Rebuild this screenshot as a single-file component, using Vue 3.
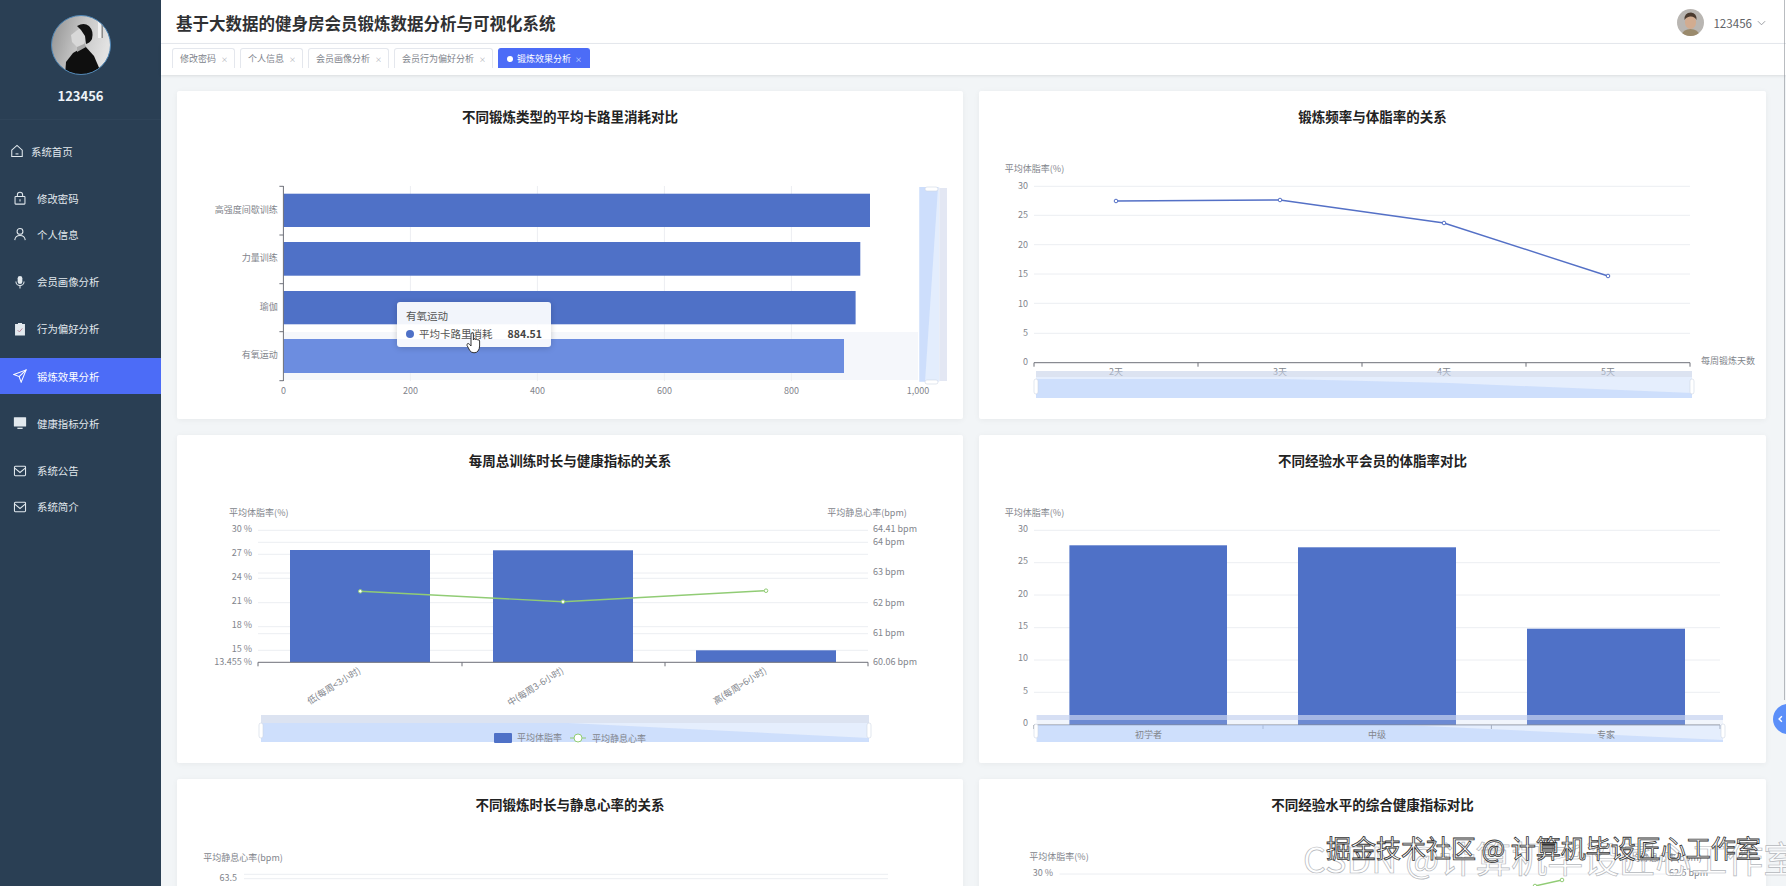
<template>
  <div class="page">
    <aside class="sidebar">
      <div class="profile">
        <svg class="profile-pic" viewBox="0 0 60 60">
          <defs>
            <clipPath id="pc"><circle cx="30" cy="30" r="29.5" /></clipPath>
            <linearGradient id="wall" x1="0" y1="0" x2="1" y2="0.3">
              <stop offset="0" stop-color="#8e8e8e" />
              <stop offset="0.55" stop-color="#c6c6c6" />
              <stop offset="1" stop-color="#e2e2e2" />
            </linearGradient>
          </defs>
          <g clip-path="url(#pc)">
            <rect width="60" height="60" fill="url(#wall)" />
            <rect x="47" y="5" width="3.5" height="18" fill="#f1f1f1" />
            <rect x="50.5" y="5" width="1.5" height="18" fill="#8d8d8d" />
            <path d="M14 61 L15 47 L22 38 L34 31 L43 41 L49 55 L51 61 Z" fill="#0f0f0f" />
            <path d="M26 30 L33 27 L35 32 L26 37 Z" fill="#a9a9a9" />
            <path d="M20 20 L29 13 L35 22 L33 29 L26 32 L21 27 Z" fill="#d8d8d8" />
            <path d="M26 11 Q33 7 38 11 Q43 16 41 24 Q39 28 35 29 L34 21 L30 15 Z" fill="#121212" />
          </g>
          <circle cx="30" cy="30" r="29.5" fill="none" stroke="#4f86b5" />
        </svg>
        <div class="profile-name">123456</div>
      </div>
      <nav class="menu">
        <div
          v-for="item in menu"
          :key="item.label"
          class="menu-item"
          :class="{ active: item.active, home: item.home, spaced: item.spaced }"
        >
          <svg class="menu-icon" viewBox="0 0 24 24" v-html="item.icon"></svg>
          <span>{{ item.label }}</span>
        </div>
      </nav>
    </aside>

    <div class="content">
      <header class="topbar">
        <h1 class="app-title">基于大数据的健身房会员锻炼数据分析与可视化系统</h1>
        <div class="user">
          <svg class="user-pic" viewBox="0 0 27 27">
            <defs>
              <clipPath id="uc"><circle cx="13.5" cy="13.5" r="13.5" /></clipPath>
            </defs>
            <g clip-path="url(#uc)">
              <rect width="27" height="27" fill="#b9b6b2" />
              <path d="M4 27 Q6 20 13.5 20 Q21 20 23 27 Z" fill="#9a8a6c" />
              <ellipse cx="13.5" cy="13" rx="5.6" ry="7" fill="#d2ac90" />
              <path d="M7.5 11 Q7 3.5 14 3.5 Q20 4 19.5 11 Q17.5 7 13 7.5 Q9 8 7.5 11 Z" fill="#4a3a2e" />
            </g>
          </svg>
          <span class="user-name">123456</span>
          <svg class="chevron" viewBox="0 0 10 6"><path d="M1 1 L5 5 L9 1" fill="none" stroke="#909399" /></svg>
        </div>
      </header>

      <div class="tabs">
        <div v-for="tab in tabs" :key="tab.label" class="tab" :class="{ active: tab.active }">
          <i v-if="tab.active" class="tab-dot"></i>
          <span>{{ tab.label }}</span>
          <span class="tab-close">×</span>
        </div>
      </div>

      <main class="board">
        <section v-for="chart in charts" :key="chart.title" class="card">
          <div class="card-title">{{ chart.title }}</div>
          <svg class="chart" viewBox="0 54 786 274">
            <rect v-for="(r, i) in chart.under" :key="'u' + i" :x="r.x" :y="r.y" :width="r.w" :height="r.h" :fill="r.fill" />
            <line v-for="(l, i) in chart.grid" :key="'g' + i" :x1="l[0]" :y1="l[1]" :x2="l[2]" :y2="l[3]" class="grid-line" />
            <rect v-for="(b, i) in chart.bars" :key="'b' + i" :x="b.x" :y="b.y" :width="b.w" :height="b.h" :fill="b.fill" />
            <g v-for="(s, i) in chart.series" :key="'s' + i">
              <polyline :points="s.points.map((p) => p.join(',')).join(' ')" fill="none" :stroke="s.color" stroke-width="1.4" />
              <circle v-for="(p, j) in s.points" :key="j" :cx="p[0]" :cy="p[1]" r="1.8" fill="#fff" :stroke="s.color" />
            </g>
            <line v-for="(l, i) in chart.axes" :key="'a' + i" :x1="l[0]" :y1="l[1]" :x2="l[2]" :y2="l[3]" class="axis-line" />
            <text
              v-for="(t, i) in chart.labels"
              :key="'t' + i"
              :x="t.x"
              :y="t.y"
              dy="-0.8"
              :text-anchor="t.a || 'middle'"
              :transform="t.rot ? `rotate(${t.rot} ${t.x} ${t.y})` : null"
              class="axis-text"
            >{{ t.t }}</text>
            <g v-if="chart.zoom">
              <rect v-for="(r, i) in chart.zoom.rects" :key="'z' + i" :x="r.x" :y="r.y" :width="r.w" :height="r.h" :fill="r.fill" />
              <polygon :points="chart.zoom.shadow" fill="rgba(178,204,250,0.45)" />
              <rect v-for="(h, i) in chart.zoom.handles" :key="'h' + i" :x="h.x" :y="h.y" :width="h.w" :height="h.h" rx="2" fill="#fff" stroke="#cfd6e4" stroke-width="0.6" />
            </g>
            <text v-for="(t, i) in chart.overLabels" :key="'o' + i" :x="t.x" :y="t.y" dy="-0.8" text-anchor="middle" class="axis-text">{{ t.t }}</text>
            <g v-if="chart.legend">
              <rect x="317" y="298" width="18" height="10" rx="1" fill="#4f71c7" />
              <text x="340" y="302" class="axis-text">平均体脂率</text>
              <line x1="393" y1="303" x2="409" y2="303" stroke="#91cc75" />
              <circle cx="401" cy="303" r="4" fill="#fff" stroke="#91cc75" />
              <text x="415" y="303" class="axis-text">平均静息心率</text>
            </g>
          </svg>

          <template v-if="chart.tooltip">
            <div class="tooltip">
              <div class="tooltip-title">有氧运动</div>
              <div class="tooltip-row">
                <i class="tooltip-dot"></i>
                <span>平均卡路里消耗</span>
                <b>884.51</b>
              </div>
            </div>
            <svg class="hand" viewBox="0 0 16 22">
              <path
                d="M5 2 Q5 .8 6.2 .8 Q7.4 .8 7.4 2 V8 L8 6.8 Q9.2 6.4 9.6 7.6 L10 7 Q11.2 6.8 11.6 8 L12 7.8 Q13.4 7.6 13.6 9 V14 Q13.6 17 12 19 Q11 20.6 8 20.8 Q5.2 20.6 3.8 18.6 L1 13.4 Q.6 12 1.8 11.6 Q3 11.4 3.6 12.4 L5 14 Z"
                fill="#fff"
                stroke="#222"
                stroke-width="0.9"
              />
            </svg>
          </template>
        </section>
      </main>
    </div>

    <div class="float-btn">
      <svg viewBox="0 0 10 12"><path d="M7 2 L3 6 L7 10" fill="none" stroke="#fff" stroke-width="2" /></svg>
    </div>
    <div class="scroll-thumb"></div>
    <div class="mark-back">CSDN @计算机毕设匠心工作室</div>
    <div class="mark-front">掘金技术社区 @ 计算机毕设匠心工作室</div>
  </div>
</template>

<script setup>
const stroke = 'fill="none" stroke="currentColor" stroke-width="1.8"'
const mail = `<rect x="2.5" y="4" width="19" height="16" rx="1.5" ${stroke}/><path d="M3 7 L12 14.5 L21 7" ${stroke}/>`

const menu = [
  { label: '系统首页', home: true, icon: `<path d="M3 10.5 L12 2.5 L21 10.5 V21.5 H3 Z" ${stroke}/><path d="M9.5 17h5" ${stroke}/>` },
  { label: '修改密码', spaced: true, icon: `<rect x="3.5" y="9.5" width="17" height="13" rx="1" ${stroke}/><path d="M7.5 9.5V6.5a4.5 4.5 0 0 1 9 0v3M12 14v4" ${stroke}/>` },
  { label: '个人信息', icon: `<circle cx="12" cy="7.5" r="5" ${stroke}/><path d="M3 22.5c.6-5.5 4.4-8 9-8s8.4 2.5 9 8" ${stroke}/>` },
  { label: '会员画像分析', spaced: true, icon: `<rect x="8" y="1.5" width="8" height="14" rx="4" fill="currentColor"/><path d="M5 11a7 7 0 0 0 14 0M12 18v5" ${stroke}/>` },
  { label: '行为偏好分析', spaced: true, icon: `<path d="M3.5 3.5h5V1.5h7v2h5V23h-17Z" fill="currentColor"/><path d="M8 14l3 3 5-6" fill="none" stroke="#b9798f" stroke-width="1.5"/>` },
  { label: '锻炼效果分析', spaced: true, active: true, icon: `<path d="M22.5 1.5 L1.5 9.5 L10.5 13 L14 22.5 Z" ${stroke}/><path d="M22.5 1.5 L10.5 13" ${stroke}/>` },
  { label: '健康指标分析', spaced: true, icon: `<rect x="1.5" y="2" width="21" height="16" rx="1" fill="currentColor"/><rect x="7.5" y="20" width="9" height="2.2" fill="currentColor"/>` },
  { label: '系统公告', spaced: true, icon: mail },
  { label: '系统简介', icon: mail }
]

const tabs = [
  { label: '修改密码' },
  { label: '个人信息' },
  { label: '会员画像分析' },
  { label: '会员行为偏好分析' },
  { label: '锻炼效果分析', active: true }
]

const BLUE = '#4f71c7'
const GREEN = '#91cc75'

const bar = (x1, x2, y1, y2, fill = BLUE) => ({ x: x1, y: y1, w: x2 - x1, h: y2 - y1, fill })
const hGrid = (x1, x2, ys) => ys.map((y) => [x1, y, x2, y])

// horizontal slider under a chart
function hZoom(x1, x2, band, shadow) {
  return {
    rects: [
      bar(x1, x2, 280, 280 + band, 'rgba(196,208,232,0.6)'),
      bar(x1, x2, 280 + band, 307, 'rgba(208,224,252,0.55)')
    ],
    shadow,
    handles: [
      { x: x1 - 2, y: 288, w: 4, h: 15 },
      { x: x2 - 2, y: 288, w: 4, h: 15 }
    ]
  }
}

const chart1 = {
  title: '不同锻炼类型的平均卡路里消耗对比',
  tooltip: true,
  under: [bar(106.4, 741, 241, 289, '#f5f7fb')],
  grid: [233.4, 360.4, 487.4, 614.4].map((x) => [x, 95, x, 290]),
  bars: [
    bar(106.4, 693, 102.7, 136),
    bar(106.4, 683.3, 151, 184.7),
    bar(106.4, 678.6, 200, 233.3),
    bar(106.4, 667, 248, 282, '#6c8de0')
  ],
  axes: [
    [106.4, 95, 106.4, 290],
    ...[95.3, 144, 192.7, 240.7, 289.7].map((y) => [102.4, y, 106.4, y])
  ],
  labels: [
    { t: '高强度间歇训练', x: 100.7, y: 119, a: 'end' },
    { t: '力量训练', x: 100.7, y: 167, a: 'end' },
    { t: '瑜伽', x: 100.7, y: 216, a: 'end' },
    { t: '有氧运动', x: 100.7, y: 264.7, a: 'end' },
    ...[0, 200, 400, 600, 800].map((v, i) => ({ t: String(v), x: 106.4 + 127 * i, y: 300 })),
    { t: '1,000', x: 741, y: 300 }
  ],
  zoom: {
    rects: [bar(742.3, 762.3, 96, 290.7, '#e3edfd'), bar(762.3, 770, 97, 290, '#e3e7f3')],
    shadow: '742.3,96 761,96 748,290.7 742.3,290.7',
    handles: [
      { x: 748, y: 96, w: 13, h: 4 },
      { x: 748, y: 289, w: 13, h: 4 }
    ]
  }
}

const chart2 = {
  title: '锻炼频率与体脂率的关系',
  grid: hGrid(55, 711, [95.3, 124.3, 153.7, 183, 212.3, 242.3]),
  series: [{ color: '#5470c6', points: [[137, 110], [301, 109], [465, 132], [629, 185]] }],
  axes: [
    [55, 271.7, 711, 271.7],
    ...[55, 219, 383, 547, 711].map((x) => [x, 271.7, x, 275.7])
  ],
  labels: [
    { t: '平均体脂率(%)', x: 55.5, y: 78 },
    ...[30, 25, 20, 15, 10, 5, 0].map((v, i) => ({ t: String(v), x: 49, y: 95.3 + i * 29.4, a: 'end' })),
    { t: '每周锻炼天数', x: 722, y: 270, a: 'start' },
    { t: '2天', x: 137, y: 281 },
    { t: '3天', x: 301, y: 281 },
    { t: '4天', x: 465, y: 281 },
    { t: '5天', x: 629, y: 281 }
  ],
  zoom: hZoom(57, 713, 6, '57,307 57,288 303,288 470,292 713,302 713,307')
}

const chart3 = {
  title: '每周总训练时长与健康指标的关系',
  legend: true,
  grid: [
    ...hGrid(81, 691, [95.3, 119.3, 143.3, 167.7, 191.7, 215.3]),
    ...hGrid(81, 691, [107.3, 138, 198.7])
  ],
  bars: [bar(113, 253, 115, 227.3), bar(316, 456, 115.3, 227.3), bar(519, 659, 215.3, 227.3)],
  series: [{ color: GREEN, points: [[183.3, 156.3], [386, 166.7], [589, 155.7]] }],
  axes: [
    [81, 227.3, 691, 227.3],
    ...[81, 285, 488, 691].map((x) => [x, 227.3, x, 231.3])
  ],
  labels: [
    { t: '平均体脂率(%)', x: 81.8, y: 78 },
    { t: '平均静息心率(bpm)', x: 690, y: 78 },
    ...[['30 %', 94], ['27 %', 118], ['24 %', 142], ['21 %', 166.7], ['18 %', 190.7], ['15 %', 214], ['13.455 %', 227]].map(
      ([t, y]) => ({ t, y, x: 75, a: 'end' })
    ),
    ...[['64.41 bpm', 94], ['64 bpm', 107], ['63 bpm', 137], ['62 bpm', 168], ['61 bpm', 198], ['60.06 bpm', 227]].map(
      ([t, y]) => ({ t, y, x: 696, a: 'start' })
    ),
    { t: '低(每周<3小时)', x: 183, y: 235, a: 'end', rot: -32 },
    { t: '中(每周3-6小时)', x: 386, y: 235, a: 'end', rot: -32 },
    { t: '高(每周>6小时)', x: 589, y: 235, a: 'end', rot: -32 }
  ],
  zoom: hZoom(84, 692, 8, '84,307 84,288 391,288 692,303 692,307')
}

const chart4 = {
  title: '不同经验水平会员的体脂率对比',
  grid: hGrid(55, 741, [95.3, 127.7, 160, 192.7, 225, 257.3]),
  bars: [bar(90.4, 248, 110.3, 290), bar(319, 477, 112.3, 290), bar(548, 706, 193.7, 290)],
  axes: [
    [55, 290, 741, 290],
    ...[55, 284, 512.4, 741].map((x) => [x, 290, x, 294])
  ],
  labels: [
    { t: '平均体脂率(%)', x: 55.5, y: 78 },
    ...[30, 25, 20, 15, 10, 5, 0].map((v, i) => ({ t: String(v), x: 49, y: 94 + i * 32.4, a: 'end' }))
  ],
  overLabels: [
    { t: '初学者', x: 169.5, y: 300 },
    { t: '中级', x: 398, y: 300 },
    { t: '专家', x: 627, y: 300 }
  ],
  zoom: {
    rects: [
      bar(57.6, 744, 280, 285, 'rgba(198,210,240,0.72)'),
      bar(57.6, 744, 285, 290, 'rgba(200,216,244,0.25)'),
      bar(57.6, 744, 290, 307, 'rgba(208,224,252,0.55)')
    ],
    shadow: '57.6,307 57.6,290 423,290 744,305 744,307',
    handles: [
      { x: 55, y: 289, w: 4, h: 14 },
      { x: 742, y: 289, w: 4, h: 14 }
    ]
  }
}

const chart5 = {
  title: '不同锻炼时长与静息心率的关系',
  grid: hGrid(67, 711, [95.3, 99.7]),
  labels: [
    { t: '平均静息心率(bpm)', x: 66, y: 79 },
    { t: '63.5', x: 60, y: 99.7, a: 'end' }
  ]
}

const chart6 = {
  title: '不同经验水平的综合健康指标对比',
  grid: hGrid(80.5, 688, [95]),
  series: [{ color: GREEN, points: [[556, 107], [583, 101]] }],
  labels: [
    { t: '平均体脂率(%)', x: 80, y: 78.3 },
    { t: '30 %', x: 74, y: 94, a: 'end' },
    { t: '平均静息心率(bpm)', x: 683, y: 79 },
    { t: '62.5 bpm', x: 690, y: 94, a: 'start' }
  ]
}

const charts = [chart1, chart2, chart3, chart4, chart5, chart6]
</script>

<style>
html,
body {
  margin: 0;
  overflow: hidden;
}
</style>

<style scoped>
.page {
  position: relative;
  display: flex;
  width: 1786px;
  height: 886px;
  overflow: hidden;
  background: #f2f5f7;
  font-family: "Noto Sans CJK SC", "Noto Sans", sans-serif;
}

.sidebar {
  flex: none;
  width: 161px;
  background: #2a3f54;
  color: #e2e9ee;
}
.profile {
  height: 120px;
  box-sizing: border-box;
  padding-top: 15px;
  text-align: center;
  border-bottom: 1px solid #2f4459;
}
.profile-pic {
  display: block;
  width: 60px;
  height: 60px;
  margin: 0 auto;
}
.profile-name {
  margin-top: 11px;
  font-size: 13px;
  font-weight: 700;
  line-height: 20px;
  color: #eef3f8;
}
.menu {
  padding-top: 13px;
}
.menu-item {
  display: flex;
  align-items: center;
  gap: 10px;
  height: 36px;
  padding-left: 13px;
  font-size: 10.4px;
}
.menu-item.spaced {
  margin-top: 11.3px;
}
.menu-item.home {
  gap: 7px;
  padding-left: 10px;
}
.menu-item.active {
  background: #4c6cf7;
  color: #fff;
}
.menu-icon {
  flex: none;
  width: 14px;
  height: 14px;
}

.content {
  flex: 1;
  min-width: 0;
}
.topbar {
  display: flex;
  align-items: center;
  justify-content: space-between;
  height: 44px;
  box-sizing: border-box;
  padding: 2px 20px 0 15px;
  background: #fff;
  border-bottom: 1px solid #e8ebf0;
}
.app-title {
  margin: 0;
  font-size: 16.5px;
  font-weight: 700;
  color: #303133;
}
.user {
  display: flex;
  align-items: center;
  color: #606266;
  font-size: 11.6px;
}
.user-pic {
  width: 27px;
  height: 27px;
  margin-right: 9px;
}
.chevron {
  width: 9px;
  height: 6px;
  margin-left: 5px;
}

.tabs {
  position: relative;
  display: flex;
  align-items: flex-end;
  gap: 5px;
  height: 31px;
  box-sizing: border-box;
  padding: 4px 0 7px 11px;
  background: #fff;
  box-shadow: 0 1px 3px rgba(0, 0, 0, 0.1);
}
.tab {
  display: flex;
  align-items: center;
  gap: 5px;
  height: 20px;
  padding: 0 7px;
  border: 1px solid #e4e7ed;
  border-bottom: 0;
  border-radius: 3px 3px 0 0;
  font-size: 9px;
  color: #80848c;
  box-sizing: border-box;
}
.tab.active {
  gap: 4px;
  padding: 0 8px;
  background: #4c6cf7;
  border-color: #4c6cf7;
  color: #fff;
}
.tab-dot {
  width: 6px;
  height: 6px;
  border-radius: 50%;
  background: #fff;
}
.tab-close {
  width: 6px;
  overflow: hidden;
  font-size: 7px;
  text-align: center;
  color: #a8abb2;
}
.tab.active .tab-close {
  color: #dfe5ff;
}

.board {
  display: grid;
  grid-template-columns: 786px 787px;
  gap: 16px;
  padding: 16px 20px 0 16px;
}
.card {
  position: relative;
  height: 328px;
  background: #fff;
  border-radius: 2px;
  box-shadow: 0 1px 6px rgba(0, 0, 0, 0.05);
}
.card-title {
  height: 54px;
  line-height: 50px;
  text-align: center;
  font-size: 13.5px;
  font-weight: 700;
  color: #222;
}
.chart {
  display: block;
  width: 786px;
  height: 274px;
}
.grid-line {
  stroke: #eceef2;
  stroke-width: 1;
}
.axis-line {
  stroke: #6e7079;
  stroke-width: 1;
}
.axis-text {
  font-size: 9px;
  fill: #82858c;
  dominant-baseline: central;
}

.tooltip {
  position: absolute;
  left: 220px;
  top: 211px;
  width: 154px;
  height: 45px;
  box-sizing: border-box;
  padding: 6px 9px;
  background: rgba(255, 255, 255, 0.93);
  border-radius: 3px;
  box-shadow: 0 1px 6px rgba(0, 0, 0, 0.18);
  font-size: 10.5px;
  color: #555;
}
.tooltip-title {
  line-height: 16px;
}
.tooltip-row {
  display: flex;
  align-items: center;
  margin-top: 2px;
  line-height: 16px;
}
.tooltip-dot {
  width: 8px;
  height: 8px;
  margin-right: 5px;
  border-radius: 50%;
  background: #4f71c7;
}
.tooltip-row b {
  margin-left: auto;
  color: #444;
}
.hand {
  position: absolute;
  left: 289px;
  top: 241px;
  width: 16px;
  height: 22px;
}

.float-btn {
  position: absolute;
  right: -2px;
  top: 704px;
  display: flex;
  align-items: center;
  width: 15px;
  height: 30px;
  padding-left: 4px;
  box-sizing: border-box;
  border-radius: 15px 0 0 15px;
  background: #5b8ff9;
}
.float-btn svg {
  width: 7px;
  height: 10px;
}
.scroll-thumb {
  position: absolute;
  right: 1px;
  top: 0;
  width: 1px;
  height: 700px;
  background: #8a8f96;
  opacity: 0.6;
}
.mark-back,
.mark-front {
  position: absolute;
  white-space: nowrap;
  pointer-events: none;
}
.mark-back {
  left: 1303px;
  top: 832px;
  font-size: 36px;
  line-height: 50px;
  color: rgba(255, 255, 255, 0.75);
  -webkit-text-stroke: 0.7px #b4b7bc;
}
.mark-front {
  left: 1326px;
  top: 829px;
  font-size: 25px;
  line-height: 36px;
  color: #fff;
  -webkit-text-stroke: 0.8px #333;
}
</style>
